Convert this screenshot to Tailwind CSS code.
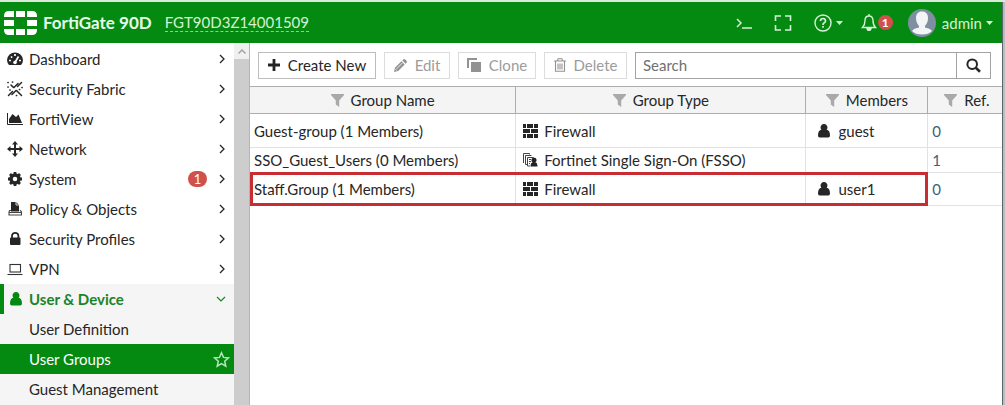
<!DOCTYPE html>
<html lang="en">
<head>
<meta charset="utf-8">
<title>FortiGate 90D - User Groups</title>
<script src="https://cdn.jsdelivr.net/npm/@tailwindcss/browser@4"></script>
</head>
<body class="bg-white">
<svg class="hidden" aria-hidden="true">
  <symbol id="user" viewBox="0 0 12 14"><path d="M6 0a3.300 3.500 0 0 1 2.600 5.800Q12 6.500 12 11.500 12 13.500 10.300 13.500H1.700Q0 13.500 0 11.500 0 6.500 3.400 5.800A3.300 3.500 0 0 1 6 0Z"/></symbol>
  <symbol id="chev" viewBox="0 0 8 12"><path d="M2 2l4 4-4 4" fill="none" stroke="currentColor" stroke-width="1.300"/></symbol>
  <symbol id="caret" viewBox="0 0 7 4"><path d="M0 0h7L3.500 4z"/></symbol>
  <symbol id="filter" viewBox="0 0 13 13"><path d="M0 0h13v1L8.200 6.500V13L4.800 10.500v-4L0 1z"/></symbol>
  <symbol id="wall" viewBox="0 0 15 14"><path d="M0 0h3v4H0zM4 0h6v4H4zM11 0h4v4h-4zM0 5h7v4H0zM8 5h7v4H8zM0 10h3v4H0zM4 10h6v4H4zM11 10h4v4h-4z"/></symbol>
</svg>
<div class="flex h-screen flex-col overflow-hidden border-t-2 border-[#dbeadb] font-['Lato','Liberation_Sans',sans-serif] text-[15px] leading-5 text-[#262626]">
  <div class="flex min-h-0 flex-1">
  <div class="flex min-w-0 flex-1 flex-col">
  <header class="flex h-[41px] shrink-0 items-center bg-[#048a11] pr-[9px] pl-1 text-[#d4f2d4]">
    <svg class="h-6 w-[33px] shrink-0" viewBox="0 0 33 24" fill="#fff"><path d="M5 0h5v6H0V5q0-5 5-5zM12 0h9v6h-9zM23 0h5q5 0 5 5v1H23zM0 9h10v6H0zM23 9h10v6H23zM0 18h10v6H5q-5 0-5-5zM12 18h9v6h-9zM23 18h10v1q0 5-5 5h-5z"/></svg>
    <h1 class="ml-[6px] shrink-0 text-[17px] font-bold text-[#e8fae8]">FortiGate 90D</h1>
    <a href="#" class="ml-[13px] border-b border-dashed border-[#8fd094] leading-[18px]">FGT90D3Z14001509</a>
    <div class="ml-auto flex shrink-0 items-center">
      <button aria-label="CLI console"><svg class="h-4 w-4" viewBox="0 0 16 16" fill="none" stroke="currentColor" stroke-width="1.500"><path d="M1 4l4 4-4 4M6 13h10"/></svg></button>
      <button aria-label="Full screen" class="ml-[22px]"><svg class="h-4 w-[18px]" viewBox="0 0 18 16" fill="none" stroke="currentColor" stroke-width="1.600"><path d="M1.500 6V1H7M11 1h5.500v5M16.500 10v5H11M7 15H1.500v-5"/></svg></button>
      <button aria-label="Help" class="ml-[22px] flex items-center gap-1"><svg class="size-[18px]" viewBox="0 0 18 18" fill="none" stroke="currentColor" stroke-width="1.400"><circle cx="9" cy="9" r="8"/><path d="M6.500 7Q6.500 4.500 9 4.500T11.500 7Q11.500 8.300 10 9 9 9.600 9 11M9 12v1.800" stroke-width="1.700"/></svg><svg class="h-1 w-[7px]" fill="currentColor"><use href="#caret"/></svg></button>
      <button aria-label="Notifications, 1 new" class="ml-[18px] flex items-center gap-px"><svg class="h-[17px] w-[16px]" viewBox="0 0 16 17" fill="none" stroke="currentColor" stroke-width="1.400"><path d="M8 0v2M8 2Q4 2 4 6.500T1.500 13.500h13Q12 11 12 6.500T8 2Z"/><path d="M6 14.500h4Q9.500 16.500 8 16.500T6 14.500Z" fill="currentColor"/></svg><span class="flex size-[15px] items-center justify-center rounded-full bg-[#d0504c] text-xs font-bold text-white">1</span></button>
      <button class="ml-[15px] flex items-center"><svg class="size-7" viewBox="0 0 28 28"><defs><clipPath id="disc"><circle cx="14" cy="14" r="14"/></clipPath></defs><g clip-path="url(#disc)"><rect width="28" height="28" fill="#7f8ea0"/><path d="M14 2.500c4 0 6 2.500 6 6.500s-1.500 6-3 8v1.500c2 .5 5.500 1 7 3.500q-3.500 3.500-10 3.500T4 22c1.500-2.500 5-3 7-3.500V17c-1.500-2-3-4-3-8s2-6.500 6-6.500z" fill="#f2f4f6"/></g></svg><span class="ml-[6px]">admin</span><svg class="ml-1 h-1 w-[7px]" fill="currentColor"><use href="#caret"/></svg></button>
    </div>
  </header>

  <div class="flex min-h-0 flex-1">
    <aside class="flex w-[250px] shrink-0 border-r border-[#b5b5b5]">
      <nav class="min-w-0 flex-1 overflow-hidden pt-px">
        <a href="#" class="flex h-[30px] items-center gap-[6px] pr-2 pl-[7px]"><svg class="size-4" viewBox="0 0 16 16"><path d="M2 14Q0 11.500 0 9a8 7.500 0 0 1 16 0q0 2.500-2 5z" fill="#262626"/><path d="M2 9.500h2M4 5.500l1.200 1.200M8 3v2M12 9.500h2M8 11.500l3.500-6" stroke="#fff" stroke-width="1.700"/><circle cx="8" cy="11.500" r="1.800" fill="#fff"/></svg><span class="flex-1">Dashboard</span><svg class="h-3 w-2"><use href="#chev"/></svg></a>
        <a href="#" class="flex h-[30px] items-center gap-[6px] pr-2 pl-[7px]"><svg class="size-4" viewBox="0 0 16 16" fill="none" stroke="#262626" stroke-width="1.500" stroke-linecap="round"><path d="M1.500 14.500l4-4M10.500 5.500l4-4M4 4l2.500 2.500M9.500 9.500l5 5M5 13.500l4-4M7 6.500l4-4"/><path d="M1 1.500h.1M5.500 1h.1M1 6h.1M15 6.500h.1M12.500 8.500h.1M3 9h.1M9.500 14.500h.1" stroke-width="1.700"/></svg><span class="flex-1">Security Fabric</span><svg class="h-3 w-2"><use href="#chev"/></svg></a>
        <a href="#" class="flex h-[30px] items-center gap-[6px] pr-2 pl-[7px]"><svg class="size-4" viewBox="0 0 16 16"><path d="M.5 2v11.500H16" fill="none" stroke="#262626"/><path d="M2 12V8l3.500-5L9 6l2.500-2.500L15 12z" fill="#262626"/></svg><span class="flex-1">FortiView</span><svg class="h-3 w-2"><use href="#chev"/></svg></a>
        <a href="#" class="flex h-[30px] items-center gap-[6px] pr-2 pl-[7px]"><svg class="size-4" viewBox="0 0 16 16" fill="#262626"><path d="M8 0l3 3.500H9V7h3.500V5L16 8l-3.500 3V9H9v3.500h2L8 16l-3-3.500h2V9H3.500v2L0 8l3.500-3v2H7V3.500H5z"/></svg><span class="flex-1">Network</span><svg class="h-3 w-2"><use href="#chev"/></svg></a>
        <a href="#" class="flex h-[30px] items-center gap-[6px] pr-2 pl-[7px]"><svg class="size-4" viewBox="0 0 16 16" fill="none" stroke="#262626"><circle cx="8" cy="8" r="4" stroke-width="3.500"/><path d="M8 3V1M8 13v2M3 8H1M13 8h2M4.500 4.500L3 3M11.500 11.500L13 13M11.500 4.500L13 3M4.500 11.500L3 13" stroke-width="2.800"/></svg><span class="flex-1">System</span><span class="mr-[5px] flex h-4 w-[19px] items-center justify-center rounded-full bg-[#d0504c] text-[13px] text-white">1</span><svg class="h-3 w-2"><use href="#chev"/></svg></a>
        <a href="#" class="flex h-[30px] items-center gap-[6px] pr-2 pl-[7px]"><svg class="size-4" viewBox="0 0 16 16"><path d="M4 1h5l3 3v6.500H4z" fill="#262626"/><path d="M9 1v3h3" fill="none" stroke="#fff" stroke-width=".8"/><path d="M4 9.500H2.500L2 11v3h12.500v-3L13 9M2 11.500h12" fill="none" stroke="#444" stroke-width="1.100"/></svg><span class="flex-1">Policy &amp; Objects</span><svg class="h-3 w-2"><use href="#chev"/></svg></a>
        <a href="#" class="flex h-[30px] items-center gap-[6px] pr-2 pl-[7px]"><svg class="size-4" viewBox="0 0 16 16"><path d="M5 7V5a3.200 3.200 0 0 1 6.400 0v2" fill="none" stroke="#262626" stroke-width="1.800"/><rect x="3" y="6.500" width="10.500" height="7.500" rx="1" fill="#262626"/></svg><span class="flex-1">Security Profiles</span><svg class="h-3 w-2"><use href="#chev"/></svg></a>
        <a href="#" class="flex h-[30px] items-center gap-[6px] pr-2 pl-[7px]"><svg class="size-4" viewBox="0 0 16 16" fill="none" stroke="#333" stroke-width="1.100"><rect x="3" y="3.500" width="10.500" height="7.500"/><path d="M.5 13.500h15"/></svg><span class="flex-1">VPN</span><svg class="h-3 w-2"><use href="#chev"/></svg></a>
        <div class="bg-[#f5f5f5] pb-8">
          <a href="#" class="flex h-[30px] items-center border-l-4 border-[#048a11] pr-2 pl-[6px] font-bold text-[#1b8428]"><svg class="h-[14px] w-3" fill="#048a11"><use href="#user"/></svg><span class="ml-[7px] flex-1">User &amp; Device</span><svg class="h-2 w-[10px]" viewBox="0 0 10 8" fill="none" stroke="currentColor" stroke-width="1.200"><path d="M1 2l4 4 4-4"/></svg></a>
          <a href="#" class="flex h-[30px] items-center pl-[29px]">User Definition</a>
          <a href="#" class="flex h-[30px] items-center bg-[#048a11] pr-1 pl-[29px] text-white"><span class="flex-1">User Groups</span><svg class="size-[17px]" viewBox="0 0 17 17" fill="none" stroke="#b5e6b8" stroke-width="1.500"><path d="M8.500 1.800l2 4.600 5 .5-3.800 3.300 1.100 5-4.300-2.600-4.300 2.600 1.100-5L1.500 6.900l5-.5z"/></svg></a>
          <a href="#" class="flex h-[30px] items-center pl-[29px]">Guest Management</a>
        </div>
      </nav>
      <div class="w-[15px] bg-[#cdcdcd]"><button aria-label="Scroll up" class="flex h-4 w-full items-center justify-center bg-[#f0f0f0]"><svg class="h-[5px] w-2" viewBox="0 0 8 5" fill="none" stroke="#a5a5a5" stroke-width="1.500"><path d="M.5 4.500L4 1l3.500 3.500"/></svg></button></div>
    </aside>

    <main class="min-w-0 flex-1">
      <div class="flex h-[43px] items-center gap-2 pr-[11px] pl-2 pt-px">
        <button class="flex h-[27px] w-[118px] shrink-0 items-center justify-center gap-2 border border-[#bdbdbd]"><svg class="size-3" viewBox="0 0 12 12" stroke="#222" stroke-width="2.800"><path d="M6 0v12M0 6h12"/></svg>Create New</button>
        <button disabled class="flex h-[27px] w-[66px] shrink-0 items-center justify-center gap-2 border border-[#dcdcdc] text-[#9c9c9c]"><svg class="size-[13px]" viewBox="0 0 14 14" fill="#929292"><path d="M0 14l1-4.500L8 2.500 11.500 6l-7 7zM9 1.500L10 .5q1-.8 2 0L13.500 2q.8 1 0 2l-1 1z"/><path d="M2.800 10.500L9 4.300M1.500 11l1.500 1.500" stroke="#fff" stroke-width=".9"/></svg>Edit</button>
        <button disabled class="flex h-[27px] w-[78px] shrink-0 items-center justify-center gap-2 border border-[#dcdcdc] text-[#9c9c9c]"><svg class="size-[14px]" viewBox="0 0 14 14" fill="#929292"><path d="M0 0h10v2H2v8H0zM4 4h10v10H4z"/></svg>Clone</button>
        <button disabled class="flex h-[27px] w-[83px] shrink-0 items-center justify-center gap-2 border border-[#dcdcdc] text-[#9c9c9c]"><svg class="h-[14px] w-3" viewBox="0 0 12 14" fill="none" stroke="#929292" stroke-width="1.100"><path d="M0 3h12M3.500 3L4 .7h4L8.500 3M1.500 3v10.300h9V3M4 5.500v6M6 5.500v6M8 5.500v6"/></svg>Delete</button>
        <div class="flex h-[27px] min-w-0 flex-1 border border-[#a3a3a3]">
          <input type="text" aria-label="Search" placeholder="Search" class="min-w-0 flex-1 px-[7px] outline-none placeholder:text-[#707070]">
          <button aria-label="Run search" class="flex w-[34px] items-center justify-center border-l border-[#a3a3a3]"><svg class="size-[15px]" viewBox="0 0 15 15" fill="none" stroke="#262626"><circle cx="6.200" cy="6.200" r="4.800" stroke-width="2"/><path d="M9.800 9.800l4.200 4" stroke-width="2.600"/></svg></button>
        </div>
      </div>
      <div class="relative">
        <table class="w-full table-fixed border-separate border-spacing-0">
          <colgroup><col class="w-[35.400%]"><col class="w-[38.600%]"><col class="w-[16.200%]"><col></colgroup>
          <thead class="bg-[#f4f4f4]">
            <tr class="h-7">
              <th scope="col" class="border-y border-r border-[#adadad] p-0 font-normal"><span class="flex items-center justify-center gap-[7px]"><svg class="size-[13px]" fill="#a9a9a9"><use href="#filter"/></svg>Group Name</span></th>
              <th scope="col" class="border-y border-r border-[#adadad] p-0 font-normal"><span class="flex items-center justify-center gap-[7px]"><svg class="size-[13px]" fill="#a9a9a9"><use href="#filter"/></svg>Group Type</span></th>
              <th scope="col" class="border-y border-r border-[#adadad] p-0 font-normal"><span class="flex items-center justify-center gap-[7px]"><svg class="size-[13px]" fill="#a9a9a9"><use href="#filter"/></svg>Members</span></th>
              <th scope="col" class="border-y border-[#adadad] p-0 pl-4 font-normal"><span class="flex items-center gap-[7px]"><svg class="size-[13px]" fill="#a9a9a9"><use href="#filter"/></svg>Ref.</span></th>
            </tr>
          </thead>
          <tbody>
            <tr class="h-[34px]">
              <td class="border-r border-b border-[#dfe3e3] p-0 pl-1">Guest-group (1 Members)</td>
              <td class="border-r border-b border-[#dfe3e3] p-0 pl-[7px]"><span class="flex items-center gap-[6px]"><svg class="h-[14px] w-[15px]" fill="#262626"><use href="#wall"/></svg>Firewall</span></td>
              <td class="border-r border-b border-[#dfe3e3] p-0 pl-3"><span class="flex items-center gap-2"><svg class="h-[14px] w-3" fill="#262626"><use href="#user"/></svg>guest</span></td>
              <td class="border-b border-[#dfe3e3] p-0 pl-1"><a href="#" class="text-[#3d5f78]">0</a></td>
            </tr>
            <tr class="h-[25px]">
              <td class="border-r border-b border-[#dfe3e3] p-0 pl-1">SSO_Guest_Users (0 Members)</td>
              <td class="border-r border-b border-[#dfe3e3] p-0 pl-[7px]"><span class="flex items-center gap-[6px]"><svg class="h-[14px] w-[15px]" viewBox="0 0 15 14"><path d="M.5 10V.5h6v1M2.500 11.500v-9h6M2.500 11.500h1.500M4.500 13V4.500h6V6M4.500 13H7" fill="none" stroke="#444"/><path d="M6 6.500h2M6 8.500h2M6 10.500h1" stroke="#444"/><path d="M11 5a2 2.200 0 0 1 1.200 4.200Q14.500 9.800 14.500 13.500H7.500Q7.500 9.800 9.800 9.200A2 2.200 0 0 1 11 5z" fill="#222"/></svg>Fortinet Single Sign-On (FSSO)</span></td>
              <td class="border-r border-b border-[#dfe3e3] p-0"></td>
              <td class="border-b border-[#dfe3e3] p-0 pl-1"><a href="#" class="text-[#3d5f78]">1</a></td>
            </tr>
            <tr class="h-[33px]">
              <td class="border-r border-b border-[#dfe3e3] p-0 pl-1">Staff.Group (1 Members)</td>
              <td class="border-r border-b border-[#dfe3e3] p-0 pl-[7px]"><span class="flex items-center gap-[6px]"><svg class="h-[14px] w-[15px]" fill="#262626"><use href="#wall"/></svg>Firewall</span></td>
              <td class="border-r border-b border-[#dfe3e3] p-0 pl-3"><span class="flex items-center gap-2"><svg class="h-[14px] w-3" fill="#262626"><use href="#user"/></svg>user1</span></td>
              <td class="border-b border-[#dfe3e3] p-0 pl-1"><a href="#" class="text-[#3d5f78]">0</a></td>
            </tr>
          </tbody>
        </table>
        <div class="pointer-events-none absolute bottom-0 left-0 h-[34px] w-[90.200%] border-3 border-[#c82d33]"></div>
      </div>
    </main>
  </div>
  </div>
  <div class="w-[3px] border-l border-[#5c6468] bg-[#b9bdc2]"></div>
  </div>
</div>
</body>
</html>
